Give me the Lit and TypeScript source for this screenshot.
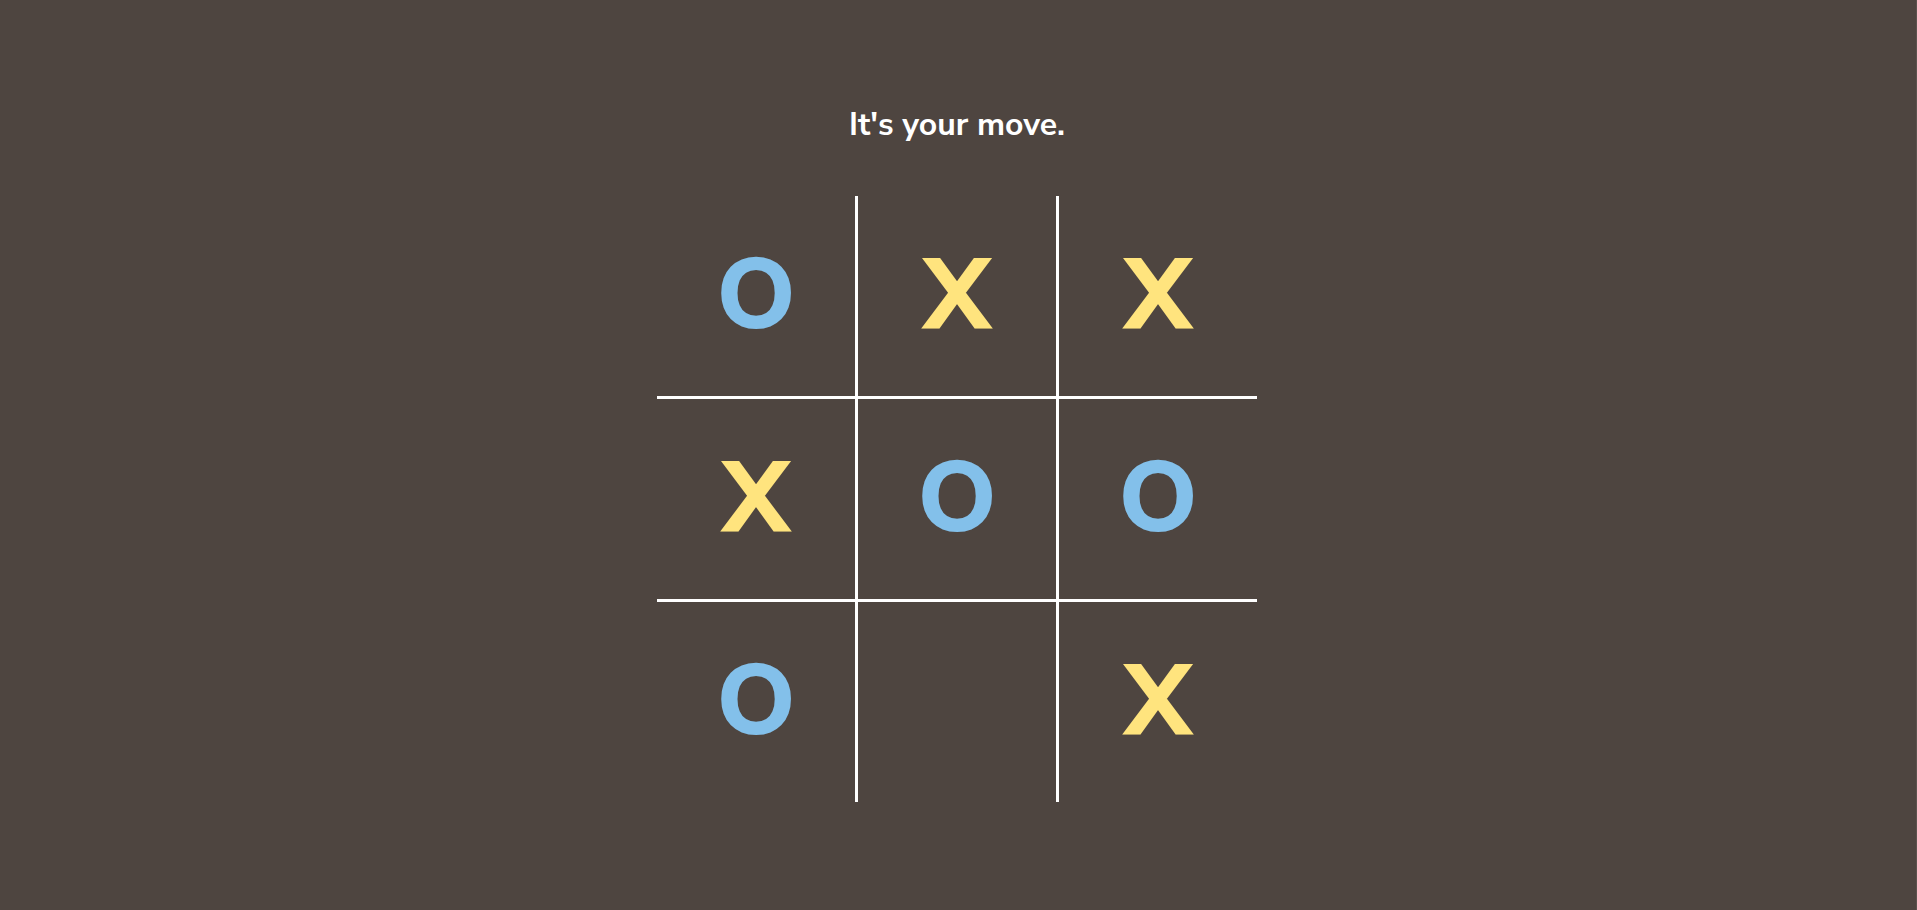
import { LitElement, html, css } from "lit";
import { customElement, state } from "lit/decorators.js";
import { classMap } from "lit/directives/class-map.js";

type Mark = "X" | "O" | "";

@customElement("app-root")
export class AppRoot extends LitElement {
  @state() private cells: Mark[] = ["O", "X", "X", "X", "O", "O", "O", "", "X"];

  static styles = css`
    :host {
      display: block;
      min-height: 100vh;
      box-sizing: border-box;
      padding: 100px 18px 48px 16px;
      background: #4e4540;
      border-right: 1px solid #5b534e;
      color: #fff;
      font-family: "Nunito Sans", "Open Sans", "Noto Sans", sans-serif;
    }
    .game {
      display: flex;
      flex-direction: column;
      align-items: center;
      gap: 46px;
    }
    .status {
      margin: 0;
      font-size: 32px;
      line-height: 50px;
      font-weight: 700;
    }
    .board {
      display: grid;
      grid-template-columns: repeat(3, 1fr);
      grid-auto-rows: 200px;
      gap: 3px;
      width: 100%;
      max-width: 600px;
      background: #fff;
    }
    .cell {
      margin: 0;
      padding: 0 0 2px;
      border: 0;
      border-radius: 0;
      background: #4e4540;
      color: inherit;
      font: inherit;
      font-size: 100px;
      line-height: 1;
      font-weight: 800;
      cursor: pointer;
    }
    .x {
      color: #ffe47e;
    }
    .o {
      color: #83c0ea;
    }
  `;

  private play(index: number) {
    if (this.cells[index]) return;
    this.cells = this.cells.map((mark, i) => (i === index ? "X" : mark));
  }

  render() {
    return html`
      <main class="game">
        <h1 class="status">It's your move.</h1>
        <div class="board">
          ${this.cells.map(
            (mark, i) => html`<button
              type="button"
              class=${classMap({ cell: true, x: mark === "X", o: mark === "O" })}
              aria-label=${`Square ${i + 1}${mark ? `, ${mark}` : ", empty"}`}
              @click=${() => this.play(i)}
            >${mark}</button>`
          )}
        </div>
      </main>
    `;
  }
}
